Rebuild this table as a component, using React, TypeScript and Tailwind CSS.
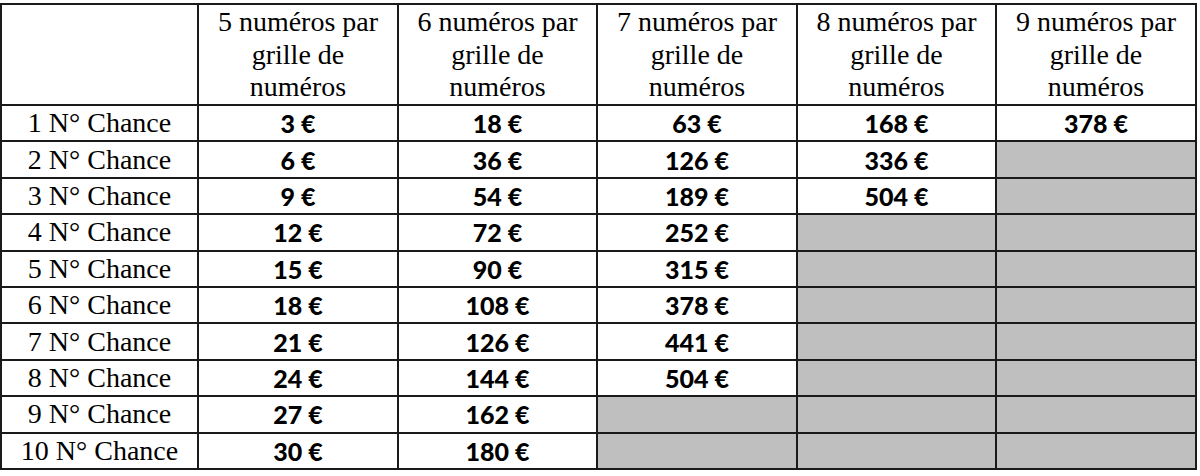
const headers = [5, 6, 7, 8, 9];

const rows: (number | null)[][] = [
  [3, 18, 63, 168, 378],
  [6, 36, 126, 336, null],
  [9, 54, 189, 504, null],
  [12, 72, 252, null, null],
  [15, 90, 315, null, null],
  [18, 108, 378, null, null],
  [21, 126, 441, null, null],
  [24, 144, 504, null, null],
  [27, 162, null, null, null],
  [30, 180, null, null, null],
];

const App = () => {
  return (
    <div className="bg-white w-[1200px] h-[476px] pt-[3px]">
      <table className="w-[1196px] table-fixed border-collapse border-2 border-[#1a1a1a] text-black">
        <colgroup>
          <col className="w-[197px]" />
          <col className="w-[200px]" />
          <col className="w-[199px]" />
          <col className="w-[200px]" />
          <col className="w-[199px]" />
          <col className="w-[200px]" />
        </colgroup>
        <thead>
          <tr className="h-[101px]">
            <th className="border-2 border-[#1a1a1a]"></th>
            {headers.map((n) => (
              <th
                key={n}
                className="border-2 border-[#1a1a1a] p-0 pt-[1px] align-top font-normal text-[28px] leading-[32.5px] font-['Liberation_Serif',serif]"
              >
                {n} numéros par
                <br />
                grille de
                <br />
                numéros
              </th>
            ))}
          </tr>
        </thead>
        <tbody>
          {rows.map((row, i) => (
            <tr key={i} className="h-[36.4px]">
              <td className="border-2 border-[#1a1a1a] p-0 text-center text-[28px] leading-[32px] font-['Liberation_Serif',serif]">
                {i + 1} N° Chance
              </td>
              {row.map((v, j) =>
                v === null ? (
                  <td key={j} className="border-2 border-[#1a1a1a] bg-[#bfbfbf] p-0"></td>
                ) : (
                  <td
                    key={j}
                    className="border-2 border-[#1a1a1a] p-0 text-center text-[25px] leading-[32px] font-black font-['Lato',sans-serif]"
                  >
                    {v} €
                  </td>
                )
              )}
            </tr>
          ))}
        </tbody>
      </table>
    </div>
  );
};

export default App;
